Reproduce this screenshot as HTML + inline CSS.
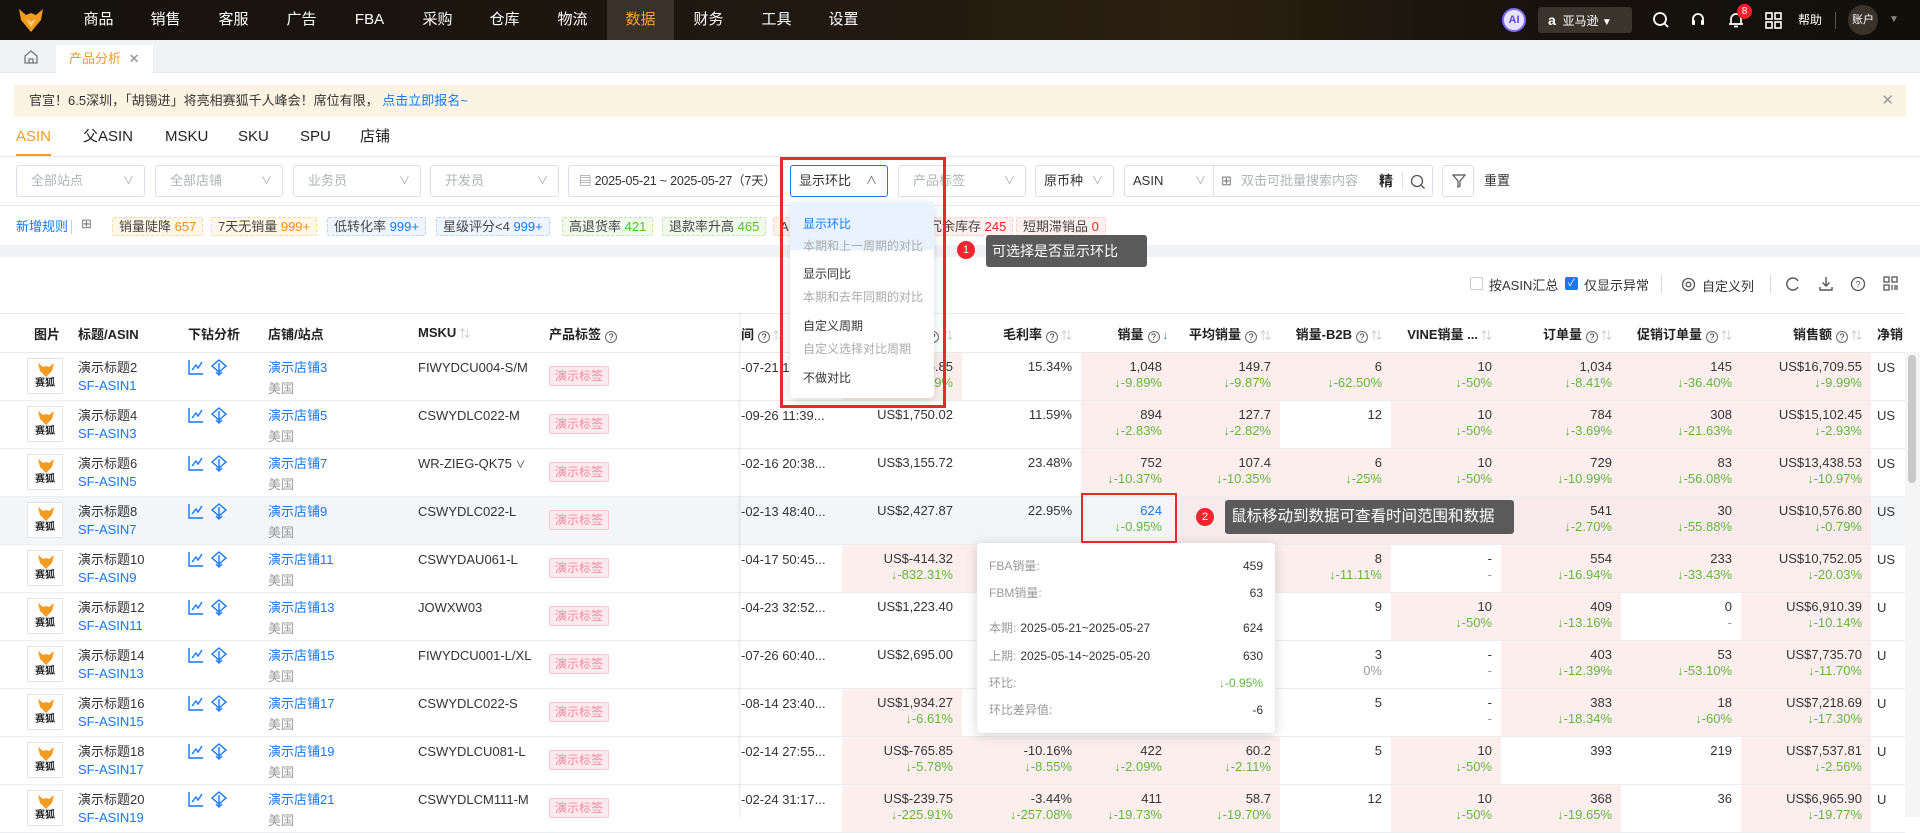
<!DOCTYPE html>
<html><head><meta charset="utf-8">
<style>
*{box-sizing:border-box;margin:0;padding:0}
body{width:1920px;height:817px;overflow:hidden;position:relative;background:#fff;font-family:"Liberation Sans","Noto Sans CJK SC",sans-serif;font-size:13px;color:#333}
.abs{position:absolute}
.nav{left:0;top:0;width:1920px;height:40px;background:linear-gradient(90deg,#15110c 0%,#1f1810 40%,#2b1f10 62%,#17120c 80%,#120f0b 100%)}
.nav .it{position:absolute;top:0;height:40px;width:67px;line-height:40px;text-align:center;color:#fff;font-size:15px}
.nav .on{background:#3a3128;color:#f7a531}
.tabbar{left:0;top:40px;width:1920px;height:33px;background:#f0f2f5;border-bottom:1px solid #e4e6ea}
.banner{left:14px;top:85px;width:1892px;height:32px;background:#fdf3e2;line-height:32px;padding-left:15px;font-size:13px;color:#333}
.tabs span{position:absolute;top:126px;font-size:15px;color:#222;line-height:22px;height:22px}
.sel{position:absolute;top:165px;height:32px;border:1px solid #dcdfe6;border-radius:3px;background:#fff;line-height:30px;padding-left:14px;color:#b0b3b8;font-size:13px;white-space:nowrap;overflow:hidden}
.sel .cv{position:absolute;right:10px;top:0;color:#aaa;font-size:11px}
.tag{position:absolute;top:217px;height:19px;line-height:17px;padding:0 6px;font-size:13px;border:1px dashed;border-radius:2px;color:#444;white-space:nowrap}
table{border-collapse:collapse;table-layout:fixed;position:absolute;left:0;top:313px;width:1905px}
th{height:39px;font-weight:bold;font-size:13px;color:#222;border-bottom:1px solid #e8eaee;border-top:1px solid #e8eaee;white-space:nowrap;overflow:hidden;text-align:left;padding-left:6px}
th.r{text-align:right;padding-right:9px}
td{height:48px;border-bottom:1px solid #ebedf0;vertical-align:top;white-space:nowrap;overflow:hidden;padding-top:6px}
td.l{padding-left:6px}
td.n{text-align:right;padding-right:9px;line-height:16px}
td.p{background:#fdeeee}
td div{line-height:18px}
td.n div{line-height:16px}
.g{color:#5fb83e}
.b{color:#1677ff}
.gr{color:#999}
.q{display:inline-block;width:12px;height:12px;border:1px solid #666;border-radius:50%;font-size:9px;line-height:10px;text-align:center;font-weight:normal;margin-left:4px;vertical-align:-1px}
.s{color:#c3c6cc;font-weight:normal;font-size:11px;margin-left:3px}
.img{width:36px;height:36px;border:1px solid #e3e3e3;margin:-1px 0 0 27px;text-align:center;position:relative}
.img svg{position:absolute;left:9px;top:3px}
.img i{position:absolute;left:0;right:0;top:19px;font-style:normal;font-size:10px;font-weight:bold;color:#222;line-height:12px}
.ptag{display:inline-block;margin-top:7px;height:20px;line-height:18px;padding:0 5px;border:1px solid #f9c6d0;background:#fde9ee;color:#f48ba5;border-radius:2px;font-size:12px}
tr.h td{background:#f4f5f7}
tr.h td.p{background:#f9eaec}
.dd{left:790px;top:202px;width:144px;height:196px;background:#fff;border-radius:4px;box-shadow:0 3px 10px rgba(0,0,0,.15);z-index:5}
.dd div{position:absolute;left:0;width:144px;padding-left:13px;font-size:12px}
.tip{background:#5a5a5a;color:#fff;border-radius:3px;z-index:7;white-space:nowrap}
.num{width:18px;height:18px;border-radius:50%;background:#f0262e;color:#fff;font-size:11px;text-align:center;line-height:18px;z-index:7}
.pop{left:977px;top:543px;width:298px;height:190px;background:#fff;border-radius:4px;box-shadow:0 2px 12px rgba(0,0,0,.18);z-index:6}
.pop div{position:absolute;left:12px;right:12px;font-size:12px;color:#999;height:20px;line-height:20px}
.pop b{position:absolute;right:0;top:0;font-weight:normal;color:#333}
.pop span{color:#333;margin-left:4px}
</style></head><body>

<div class="abs nav">
  <svg class="abs" style="left:18px;top:8px" width="26" height="25" viewBox="0 0 26 25"><path d="M1 1 L8 7 L13 5 L18 7 L25 1 L23 12 L13 24 L3 12 Z" fill="#f39b1f"/><path d="M8 11 L13 14 L18 11 L13 19 Z" fill="#ffd27a"/></svg>
  <div class="it" style="left:65px">商品</div>
  <div class="it" style="left:132px">销售</div>
  <div class="it" style="left:200px">客服</div>
  <div class="it" style="left:268px">广告</div>
  <div class="it" style="left:336px">FBA</div>
  <div class="it" style="left:404px">采购</div>
  <div class="it" style="left:471px">仓库</div>
  <div class="it" style="left:539px">物流</div>
  <div class="it on" style="left:607px">数据</div>
  <div class="it" style="left:675px">财务</div>
  <div class="it" style="left:743px">工具</div>
  <div class="it" style="left:810px">设置</div>
  <div class="abs" style="left:1502px;top:8px;width:24px;height:24px;border-radius:50%;background:#e8e4ff;border:2px solid #7b6cf6;color:#5a45e8;font-weight:bold;font-size:11px;text-align:center;line-height:20px">AI</div>
  <div class="abs" style="left:1538px;top:7px;width:94px;height:26px;border-radius:3px;background:#3b342c;color:#fff;font-size:12px;line-height:26px;padding-left:10px"><b style="font-size:14px">a</b>&nbsp; 亚马逊 <span style="font-size:10px">▼</span></div>
  <svg class="abs" style="left:1652px;top:11px" width="18" height="18" viewBox="0 0 18 18"><circle cx="8" cy="8" r="6" stroke="#fff" stroke-width="1.8" fill="none"/><path d="M12.5 12.5 L16 16" stroke="#fff" stroke-width="1.8"/></svg>
  <svg class="abs" style="left:1689px;top:11px" width="18" height="18" viewBox="0 0 18 18"><path d="M4 11 V8 a5 5 0 0 1 10 0 V11" stroke="#fff" stroke-width="1.8" fill="none"/><rect x="3" y="9" width="3" height="5" rx="1" fill="#fff"/><rect x="12" y="9" width="3" height="5" rx="1" fill="#fff"/></svg>
  <svg class="abs" style="left:1727px;top:11px" width="18" height="18" viewBox="0 0 18 18"><path d="M4 13 V8 a5 5 0 0 1 10 0 V13 Z M2 13 H16 M7 15.5 H11" stroke="#fff" stroke-width="1.7" fill="none"/></svg>
  <div class="abs" style="left:1737px;top:4px;width:15px;height:15px;border-radius:50%;background:#f5222d;color:#fff;font-size:10px;text-align:center;line-height:15px">8</div>
  <svg class="abs" style="left:1765px;top:12px" width="17" height="17" viewBox="0 0 17 17"><g fill="none" stroke="#fff" stroke-width="1.6"><rect x="1" y="1" width="6" height="6"/><rect x="10" y="1" width="6" height="6"/><rect x="1" y="10" width="6" height="6"/><rect x="10" y="10" width="6" height="6"/></g></svg>
  <div class="abs" style="left:1798px;top:0;line-height:40px;color:#fff;font-size:12px">帮助</div>
  <div class="abs" style="left:1835px;top:12px;width:1px;height:17px;background:#555"></div>
  <div class="abs" style="left:1848px;top:5px;width:30px;height:30px;border-radius:50%;background:#3a332c;color:#fff;font-size:11px;text-align:center;line-height:30px">账户</div>
  <div class="abs" style="left:1889px;top:0;line-height:40px;color:#888;font-size:10px">▼</div>
</div>

<div class="abs tabbar">
  <svg class="abs" style="left:23px;top:9px" width="16" height="16" viewBox="0 0 16 16"><path d="M2 7 L8 2 L14 7 V14 H2 Z M6 14 V10 H10 V14" stroke="#777" stroke-width="1.3" fill="none"/></svg>
  <div class="abs" style="left:56px;top:5px;width:97px;height:28px;background:#fff;color:#f59a23;line-height:28px;padding-left:13px;font-size:13px">产品分析 <span style="color:#888;margin-left:4px">✕</span></div>
</div>

<div class="abs banner">官宣！6.5深圳，「胡锡进」将亮相赛狐千人峰会！席位有限，&nbsp;<span style="color:#1677ff">点击立即报名~</span><span class="abs" style="right:12px;top:0;color:#999;font-size:15px">✕</span></div>

<div class="tabs">
  <span style="left:16px;color:#f59a23">ASIN</span>
  <span style="left:83px">父ASIN</span>
  <span style="left:165px">MSKU</span>
  <span style="left:238px">SKU</span>
  <span style="left:300px">SPU</span>
  <span style="left:360px">店铺</span>
</div>
<div class="abs" style="left:16px;top:154px;width:35px;height:2px;background:#f59a23"></div>
<div class="abs" style="left:0;top:156px;width:1920px;height:1px;background:#e8eaee"></div>

<div class="sel" style="left:16px;width:129px">全部站点<span class="cv">∨</span></div>
<div class="sel" style="left:155px;width:128px">全部店铺<span class="cv">∨</span></div>
<div class="sel" style="left:293px;width:128px">业务员<span class="cv">∨</span></div>
<div class="sel" style="left:430px;width:129px">开发员<span class="cv">∨</span></div>
<div class="sel" style="left:568px;width:213px;color:#333;padding-left:10px;font-size:12.5px;letter-spacing:-0.2px"><span style="color:#777">▤</span> 2025-05-21 ~ 2025-05-27（7天）</div>
<div class="sel" style="left:790px;width:98px;color:#333;border-color:#1677ff;padding-left:8px">显示环比<span class="cv" style="color:#666">∧</span></div>
<div class="sel" style="left:898px;width:128px">产品标签<span class="cv">∨</span></div>
<div class="sel" style="left:1035px;width:79px;color:#333;padding-left:8px">原币种<span class="cv">∨</span></div>
<div class="sel" style="left:1124px;width:309px;color:#333;padding-left:8px">ASIN<span class="abs" style="left:70px;top:0;color:#aaa;font-size:11px">∨</span>
  <span class="abs" style="left:88px;top:0;height:30px;width:1px;background:#dcdfe6"></span>
  <span class="abs" style="left:96px;top:0;color:#777">⊞</span>
  <span class="abs" style="left:116px;top:0;color:#b0b3b8">双击可批量搜索内容</span>
  <span class="abs" style="left:254px;top:0;color:#222;font-weight:bold;font-size:14px">精</span>
  <span class="abs" style="left:277px;top:6px;height:18px;width:1px;background:#dcdfe6"></span>
  <svg class="abs" style="left:285px;top:8px" width="16" height="16" viewBox="0 0 16 16"><circle cx="7" cy="7" r="5.5" stroke="#555" stroke-width="1.3" fill="none"/><path d="M11 11 L14.5 14.5" stroke="#555" stroke-width="1.3"/></svg>
</div>
<div class="sel" style="left:1442px;width:32px;padding:0"><svg class="abs" style="left:8px;top:7px" width="16" height="16" viewBox="0 0 16 16"><path d="M2 2 H14 L9 8 V13 L7 14 V8 Z" stroke="#555" stroke-width="1.2" fill="none"/></svg></div>
<div class="abs" style="left:1484px;top:165px;line-height:32px;font-size:13px">重置</div>

<div class="abs" style="left:0;top:205px;width:1920px;height:1px;background:#e8eaee"></div>
<div class="abs" style="left:16px;top:217px;line-height:19px;color:#1677ff">新增规则</div>
<div class="abs" style="left:71px;top:220px;width:1px;height:14px;background:#ccc"></div>
<div class="abs" style="left:81px;top:216px;color:#777">⊞</div>
<div class="tag" style="left:112px;background:#fff7e8;border-color:#fbd9a6">销量陡降 <span style="color:#fa8c16">657</span></div>
<div class="tag" style="left:211px;background:#fff7e8;border-color:#fbd9a6">7天无销量 <span style="color:#fa8c16">999+</span></div>
<div class="tag" style="left:327px;background:#eef5ff;border-color:#b7d4ff">低转化率 <span style="color:#1677ff">999+</span></div>
<div class="tag" style="left:436px;background:#eef5ff;border-color:#b7d4ff">星级评分&lt;4 <span style="color:#1677ff">999+</span></div>
<div class="tag" style="left:562px;background:#f1f9ec;border-color:#c3e6ad">高退货率 <span style="color:#52c41a">421</span></div>
<div class="tag" style="left:662px;background:#f1f9ec;border-color:#c3e6ad">退款率升高 <span style="color:#52c41a">465</span></div>
<div class="tag" style="left:773px;background:#fff0f0;border-color:#fcc">A</div>
<div class="tag" style="left:922px;background:#fff0f0;border-color:#fcc">冗余库存 <span style="color:#f5222d">245</span></div>
<div class="tag" style="left:1016px;background:#fff0f0;border-color:#fcc">短期滞销品 <span style="color:#f5222d">0</span></div>

<div class="abs" style="left:0;top:245px;width:1920px;height:12px;background:#f0f2f5"></div>

<div class="abs" style="left:1470px;top:277px;width:13px;height:13px;border:1px solid #ccc;border-radius:2px"></div>
<div class="abs" style="left:1489px;top:275px;font-size:13px">按ASIN汇总</div>
<div class="abs" style="left:1565px;top:277px;width:13px;height:13px;background:#1677ff;border-radius:2px;color:#fff;font-size:10px;line-height:13px;text-align:center">✓</div>
<div class="abs" style="left:1584px;top:275px;font-size:13px">仅显示异常</div>
<div class="abs" style="left:1661px;top:274px;width:1px;height:20px;background:#ddd"></div>
<svg class="abs" style="left:1681px;top:277px" width="15" height="15" viewBox="0 0 15 15"><circle cx="7.5" cy="7.5" r="6" stroke="#555" stroke-width="1.3" fill="none"/><circle cx="7.5" cy="7.5" r="2.3" stroke="#555" stroke-width="1.3" fill="none"/></svg>
<div class="abs" style="left:1702px;top:276px;font-size:13px">自定义列</div>
<div class="abs" style="left:1770px;top:274px;width:1px;height:20px;background:#ddd"></div>
<svg class="abs" style="left:1785px;top:276px" width="16" height="16" viewBox="0 0 16 16"><path d="M13 5 A6 6 0 1 0 13 11" stroke="#555" stroke-width="1.4" fill="none"/></svg>
<svg class="abs" style="left:1818px;top:276px" width="16" height="16" viewBox="0 0 16 16"><path d="M8 1 V10 M4.5 6.5 L8 10 L11.5 6.5 M2 11 V14 H14 V11" stroke="#555" stroke-width="1.4" fill="none"/></svg>
<svg class="abs" style="left:1850px;top:276px" width="16" height="16" viewBox="0 0 16 16"><circle cx="8" cy="8" r="6.5" stroke="#555" stroke-width="1.3" fill="none"/><text x="8" y="11.5" font-size="9" text-anchor="middle" fill="#555" font-family="Liberation Sans">?</text></svg>
<svg class="abs" style="left:1883px;top:276px" width="15" height="15" viewBox="0 0 15 15"><g fill="none" stroke="#555" stroke-width="1.3"><rect x="1" y="1" width="5" height="5"/><rect x="9" y="1" width="5" height="5"/><rect x="1" y="9" width="5" height="5"/><path d="M9 9 V14 M12 9 V14 M14 9 V14"/></g></svg>

<table>
<colgroup><col style="width:72px"><col style="width:110px"><col style="width:80px"><col style="width:150px"><col style="width:131px"><col style="width:198px"><col style="width:101px"><col style="width:120px"><col style="width:119px"><col style="width:96px"><col style="width:103px"><col style="width:111px"><col style="width:110px"><col style="width:120px"><col style="width:120px"><col style="width:130px"><col style="width:34px"></colgroup>
<tr><th style="padding-left:34px">图片</th><th>标题/ASIN</th><th>下钻分析</th><th>店铺/站点</th><th>MSKU<span class="s">⇅</span></th><th>产品标签<span class="q">?</span></th><th style="padding-left:0">间<span class="q">?</span><span class="s">⇅</span></th><th class="r">销售额<span class="q">?</span><span class="s">⇅</span></th><th class="r">毛利率<span class="q">?</span><span class="s">⇅</span></th><th class="r">销量<span class="q">?</span><span class="s" style="color:#1677ff">↓</span></th><th class="r">平均销量<span class="q">?</span><span class="s">⇅</span></th><th class="r">销量-B2B<span class="q">?</span><span class="s">⇅</span></th><th class="r">VINE销量 ...<span class="s">⇅</span></th><th class="r">订单量<span class="q">?</span><span class="s">⇅</span></th><th class="r">促销订单量<span class="q">?</span><span class="s">⇅</span></th><th class="r">销售额<span class="q">?</span><span class="s">⇅</span></th><th>净销</th></tr>

<tr><td><div class="img"><svg width="18" height="16" viewBox="0 0 18 16"><path d="M1 1 L6 5 L9 4 L12 5 L17 1 L15 9 L9 15 L3 9 Z" fill="#f39b1f"/></svg><i>赛狐</i></div></td><td class="l"><div>演示标题2</div><div class="b">SF-ASIN1</div></td><td class="l"><svg width="44" height="18" viewBox="0 0 44 18"><path d="M1 1 V15 H15 M4 11 L8 6 L10 9 L14 3" stroke="#1677ff" stroke-width="1.4" fill="none"/><path d="M31 1 L38 7 L31 13 L24 7 Z M31 4 V16 M28 13 L31 16 L34 13" stroke="#1677ff" stroke-width="1.4" fill="none"/></svg></td><td class="l"><div class="b">演示店铺3</div><div class="gr" style="margin-top:3px">美国</div></td><td class="l"><div>FIWYDCU004-S/M</div></td><td class="l"><span class="ptag">演示标签</span></td><td><div>-07-21 12:45...</div></td><td class="n p"><div>US$2,115.85</div><div class="g">↓-3.39%</div></td><td class="n"><div>15.34%</div></td><td class="n p" style="padding-right:15px"><div>1,048</div><div class="g">↓-9.89%</div></td><td class="n p"><div>149.7</div><div class="g">↓-9.87%</div></td><td class="n p"><div>6</div><div class="g">↓-62.50%</div></td><td class="n p"><div>10</div><div class="g">↓-50%</div></td><td class="n p"><div>1,034</div><div class="g">↓-8.41%</div></td><td class="n p"><div>145</div><div class="g">↓-36.40%</div></td><td class="n p"><div>US$16,709.55</div><div class="g">↓-9.99%</div></td><td class="l"><div>US</div></td></tr>

<tr><td><div class="img"><svg width="18" height="16" viewBox="0 0 18 16"><path d="M1 1 L6 5 L9 4 L12 5 L17 1 L15 9 L9 15 L3 9 Z" fill="#f39b1f"/></svg><i>赛狐</i></div></td><td class="l"><div>演示标题4</div><div class="b">SF-ASIN3</div></td><td class="l"><svg width="44" height="18" viewBox="0 0 44 18"><path d="M1 1 V15 H15 M4 11 L8 6 L10 9 L14 3" stroke="#1677ff" stroke-width="1.4" fill="none"/><path d="M31 1 L38 7 L31 13 L24 7 Z M31 4 V16 M28 13 L31 16 L34 13" stroke="#1677ff" stroke-width="1.4" fill="none"/></svg></td><td class="l"><div class="b">演示店铺5</div><div class="gr" style="margin-top:3px">美国</div></td><td class="l"><div>CSWYDLC022-M</div></td><td class="l"><span class="ptag">演示标签</span></td><td><div>-09-26 11:39...</div></td><td class="n"><div>US$1,750.02</div></td><td class="n"><div>11.59%</div></td><td class="n p" style="padding-right:15px"><div>894</div><div class="g">↓-2.83%</div></td><td class="n p"><div>127.7</div><div class="g">↓-2.82%</div></td><td class="n"><div>12</div></td><td class="n p"><div>10</div><div class="g">↓-50%</div></td><td class="n p"><div>784</div><div class="g">↓-3.69%</div></td><td class="n p"><div>308</div><div class="g">↓-21.63%</div></td><td class="n p"><div>US$15,102.45</div><div class="g">↓-2.93%</div></td><td class="l"><div>US</div></td></tr>

<tr><td><div class="img"><svg width="18" height="16" viewBox="0 0 18 16"><path d="M1 1 L6 5 L9 4 L12 5 L17 1 L15 9 L9 15 L3 9 Z" fill="#f39b1f"/></svg><i>赛狐</i></div></td><td class="l"><div>演示标题6</div><div class="b">SF-ASIN5</div></td><td class="l"><svg width="44" height="18" viewBox="0 0 44 18"><path d="M1 1 V15 H15 M4 11 L8 6 L10 9 L14 3" stroke="#1677ff" stroke-width="1.4" fill="none"/><path d="M31 1 L38 7 L31 13 L24 7 Z M31 4 V16 M28 13 L31 16 L34 13" stroke="#1677ff" stroke-width="1.4" fill="none"/></svg></td><td class="l"><div class="b">演示店铺7</div><div class="gr" style="margin-top:3px">美国</div></td><td class="l"><div>WR-ZIEG-QK75 <span style="font-size:10px">∨</span></div></td><td class="l"><span class="ptag">演示标签</span></td><td><div>-02-16 20:38...</div></td><td class="n"><div>US$3,155.72</div></td><td class="n"><div>23.48%</div></td><td class="n p" style="padding-right:15px"><div>752</div><div class="g">↓-10.37%</div></td><td class="n p"><div>107.4</div><div class="g">↓-10.35%</div></td><td class="n p"><div>6</div><div class="g">↓-25%</div></td><td class="n p"><div>10</div><div class="g">↓-50%</div></td><td class="n p"><div>729</div><div class="g">↓-10.99%</div></td><td class="n p"><div>83</div><div class="g">↓-56.08%</div></td><td class="n p"><div>US$13,438.53</div><div class="g">↓-10.97%</div></td><td class="l"><div>US</div></td></tr>

<tr class="h"><td><div class="img" style="background:#fff"><svg width="18" height="16" viewBox="0 0 18 16"><path d="M1 1 L6 5 L9 4 L12 5 L17 1 L15 9 L9 15 L3 9 Z" fill="#f39b1f"/></svg><i>赛狐</i></div></td><td class="l"><div>演示标题8</div><div class="b">SF-ASIN7</div></td><td class="l"><svg width="44" height="18" viewBox="0 0 44 18"><path d="M1 1 V15 H15 M4 11 L8 6 L10 9 L14 3" stroke="#1677ff" stroke-width="1.4" fill="none"/><path d="M31 1 L38 7 L31 13 L24 7 Z M31 4 V16 M28 13 L31 16 L34 13" stroke="#1677ff" stroke-width="1.4" fill="none"/></svg></td><td class="l"><div class="b">演示店铺9</div><div class="gr" style="margin-top:3px">美国</div></td><td class="l"><div>CSWYDLC022-L</div></td><td class="l"><span class="ptag">演示标签</span></td><td><div>-02-13 48:40...</div></td><td class="n"><div>US$2,427.87</div></td><td class="n"><div>22.95%</div></td><td class="n" style="padding-right:15px"><div class="b">624</div><div class="g">↓-0.95%</div></td><td class="n p"><div>89.1</div><div class="g">↓-1%</div></td><td class="n p"><div>6</div><div class="g">↓-60%</div></td><td class="n p"><div>10</div><div class="g">↓-50%</div></td><td class="n p"><div>541</div><div class="g">↓-2.70%</div></td><td class="n p"><div>30</div><div class="g">↓-55.88%</div></td><td class="n p"><div>US$10,576.80</div><div class="g">↓-0.79%</div></td><td class="l"><div>US</div></td></tr>

<tr><td><div class="img"><svg width="18" height="16" viewBox="0 0 18 16"><path d="M1 1 L6 5 L9 4 L12 5 L17 1 L15 9 L9 15 L3 9 Z" fill="#f39b1f"/></svg><i>赛狐</i></div></td><td class="l"><div>演示标题10</div><div class="b">SF-ASIN9</div></td><td class="l"><svg width="44" height="18" viewBox="0 0 44 18"><path d="M1 1 V15 H15 M4 11 L8 6 L10 9 L14 3" stroke="#1677ff" stroke-width="1.4" fill="none"/><path d="M31 1 L38 7 L31 13 L24 7 Z M31 4 V16 M28 13 L31 16 L34 13" stroke="#1677ff" stroke-width="1.4" fill="none"/></svg></td><td class="l"><div class="b">演示店铺11</div><div class="gr" style="margin-top:3px">美国</div></td><td class="l"><div>CSWYDAU061-L</div></td><td class="l"><span class="ptag">演示标签</span></td><td><div>-04-17 50:45...</div></td><td class="n p"><div>US$-414.32</div><div class="g">↓-832.31%</div></td><td class="n p"><div>-8.12%</div><div class="g">↓-5.10%</div></td><td class="n p" style="padding-right:15px"><div>520</div><div class="g">↓-3.10%</div></td><td class="n p"><div>74.3</div><div class="g">↓-3.12%</div></td><td class="n p"><div>8</div><div class="g">↓-11.11%</div></td><td class="n"><div>-</div><div class="gr">-</div></td><td class="n p"><div>554</div><div class="g">↓-16.94%</div></td><td class="n p"><div>233</div><div class="g">↓-33.43%</div></td><td class="n p"><div>US$10,752.05</div><div class="g">↓-20.03%</div></td><td class="l"><div>US</div></td></tr>

<tr><td><div class="img"><svg width="18" height="16" viewBox="0 0 18 16"><path d="M1 1 L6 5 L9 4 L12 5 L17 1 L15 9 L9 15 L3 9 Z" fill="#f39b1f"/></svg><i>赛狐</i></div></td><td class="l"><div>演示标题12</div><div class="b">SF-ASIN11</div></td><td class="l"><svg width="44" height="18" viewBox="0 0 44 18"><path d="M1 1 V15 H15 M4 11 L8 6 L10 9 L14 3" stroke="#1677ff" stroke-width="1.4" fill="none"/><path d="M31 1 L38 7 L31 13 L24 7 Z M31 4 V16 M28 13 L31 16 L34 13" stroke="#1677ff" stroke-width="1.4" fill="none"/></svg></td><td class="l"><div class="b">演示店铺13</div><div class="gr" style="margin-top:3px">美国</div></td><td class="l"><div>JOWXW03</div></td><td class="l"><span class="ptag">演示标签</span></td><td><div>-04-23 32:52...</div></td><td class="n"><div>US$1,223.40</div></td><td class="n"><div>9.12%</div></td><td class="n" style="padding-right:15px"><div>410</div></td><td class="n"><div>58.6</div></td><td class="n"><div>9</div></td><td class="n p"><div>10</div><div class="g">↓-50%</div></td><td class="n p"><div>409</div><div class="g">↓-13.16%</div></td><td class="n"><div>0</div><div class="gr">-</div></td><td class="n p"><div>US$6,910.39</div><div class="g">↓-10.14%</div></td><td class="l"><div>U</div></td></tr>

<tr><td><div class="img"><svg width="18" height="16" viewBox="0 0 18 16"><path d="M1 1 L6 5 L9 4 L12 5 L17 1 L15 9 L9 15 L3 9 Z" fill="#f39b1f"/></svg><i>赛狐</i></div></td><td class="l"><div>演示标题14</div><div class="b">SF-ASIN13</div></td><td class="l"><svg width="44" height="18" viewBox="0 0 44 18"><path d="M1 1 V15 H15 M4 11 L8 6 L10 9 L14 3" stroke="#1677ff" stroke-width="1.4" fill="none"/><path d="M31 1 L38 7 L31 13 L24 7 Z M31 4 V16 M28 13 L31 16 L34 13" stroke="#1677ff" stroke-width="1.4" fill="none"/></svg></td><td class="l"><div class="b">演示店铺15</div><div class="gr" style="margin-top:3px">美国</div></td><td class="l"><div>FIWYDCU001-L/XL</div></td><td class="l"><span class="ptag">演示标签</span></td><td><div>-07-26 60:40...</div></td><td class="n"><div>US$2,695.00</div></td><td class="n"><div>12.30%</div></td><td class="n" style="padding-right:15px"><div>403</div></td><td class="n"><div>57.6</div></td><td class="n"><div>3</div><div class="gr">0%</div></td><td class="n"><div>-</div><div class="gr">-</div></td><td class="n p"><div>403</div><div class="g">↓-12.39%</div></td><td class="n p"><div>53</div><div class="g">↓-53.10%</div></td><td class="n p"><div>US$7,735.70</div><div class="g">↓-11.70%</div></td><td class="l"><div>U</div></td></tr>

<tr><td><div class="img"><svg width="18" height="16" viewBox="0 0 18 16"><path d="M1 1 L6 5 L9 4 L12 5 L17 1 L15 9 L9 15 L3 9 Z" fill="#f39b1f"/></svg><i>赛狐</i></div></td><td class="l"><div>演示标题16</div><div class="b">SF-ASIN15</div></td><td class="l"><svg width="44" height="18" viewBox="0 0 44 18"><path d="M1 1 V15 H15 M4 11 L8 6 L10 9 L14 3" stroke="#1677ff" stroke-width="1.4" fill="none"/><path d="M31 1 L38 7 L31 13 L24 7 Z M31 4 V16 M28 13 L31 16 L34 13" stroke="#1677ff" stroke-width="1.4" fill="none"/></svg></td><td class="l"><div class="b">演示店铺17</div><div class="gr" style="margin-top:3px">美国</div></td><td class="l"><div>CSWYDLC022-S</div></td><td class="l"><span class="ptag">演示标签</span></td><td><div>-08-14 23:40...</div></td><td class="n p"><div>US$1,934.27</div><div class="g">↓-6.61%</div></td><td class="n"><div>8.40%</div></td><td class="n" style="padding-right:15px"><div>390</div></td><td class="n"><div>55.7</div></td><td class="n"><div>5</div></td><td class="n"><div>-</div><div class="gr">-</div></td><td class="n p"><div>383</div><div class="g">↓-18.34%</div></td><td class="n p"><div>18</div><div class="g">↓-60%</div></td><td class="n p"><div>US$7,218.69</div><div class="g">↓-17.30%</div></td><td class="l"><div>U</div></td></tr>

<tr><td><div class="img"><svg width="18" height="16" viewBox="0 0 18 16"><path d="M1 1 L6 5 L9 4 L12 5 L17 1 L15 9 L9 15 L3 9 Z" fill="#f39b1f"/></svg><i>赛狐</i></div></td><td class="l"><div>演示标题18</div><div class="b">SF-ASIN17</div></td><td class="l"><svg width="44" height="18" viewBox="0 0 44 18"><path d="M1 1 V15 H15 M4 11 L8 6 L10 9 L14 3" stroke="#1677ff" stroke-width="1.4" fill="none"/><path d="M31 1 L38 7 L31 13 L24 7 Z M31 4 V16 M28 13 L31 16 L34 13" stroke="#1677ff" stroke-width="1.4" fill="none"/></svg></td><td class="l"><div class="b">演示店铺19</div><div class="gr" style="margin-top:3px">美国</div></td><td class="l"><div>CSWYDLCU081-L</div></td><td class="l"><span class="ptag">演示标签</span></td><td><div>-02-14 27:55...</div></td><td class="n p"><div>US$-765.85</div><div class="g">↓-5.78%</div></td><td class="n p"><div>-10.16%</div><div class="g">↓-8.55%</div></td><td class="n p" style="padding-right:15px"><div>422</div><div class="g">↓-2.09%</div></td><td class="n p"><div>60.2</div><div class="g">↓-2.11%</div></td><td class="n"><div>5</div></td><td class="n p"><div>10</div><div class="g">↓-50%</div></td><td class="n"><div>393</div></td><td class="n"><div>219</div></td><td class="n p"><div>US$7,537.81</div><div class="g">↓-2.56%</div></td><td class="l"><div>U</div></td></tr>

<tr><td><div class="img"><svg width="18" height="16" viewBox="0 0 18 16"><path d="M1 1 L6 5 L9 4 L12 5 L17 1 L15 9 L9 15 L3 9 Z" fill="#f39b1f"/></svg><i>赛狐</i></div></td><td class="l"><div>演示标题20</div><div class="b">SF-ASIN19</div></td><td class="l"><svg width="44" height="18" viewBox="0 0 44 18"><path d="M1 1 V15 H15 M4 11 L8 6 L10 9 L14 3" stroke="#1677ff" stroke-width="1.4" fill="none"/><path d="M31 1 L38 7 L31 13 L24 7 Z M31 4 V16 M28 13 L31 16 L34 13" stroke="#1677ff" stroke-width="1.4" fill="none"/></svg></td><td class="l"><div class="b">演示店铺21</div><div class="gr" style="margin-top:3px">美国</div></td><td class="l"><div>CSWYDLCM111-M</div></td><td class="l"><span class="ptag">演示标签</span></td><td><div>-02-24 31:17...</div></td><td class="n p"><div>US$-239.75</div><div class="g">↓-225.91%</div></td><td class="n p"><div>-3.44%</div><div class="g">↓-257.08%</div></td><td class="n p" style="padding-right:15px"><div>411</div><div class="g">↓-19.73%</div></td><td class="n p"><div>58.7</div><div class="g">↓-19.70%</div></td><td class="n"><div>12</div></td><td class="n p"><div>10</div><div class="g">↓-50%</div></td><td class="n p"><div>368</div><div class="g">↓-19.65%</div></td><td class="n"><div>36</div></td><td class="n p"><div>US$6,965.90</div><div class="g">↓-19.77%</div></td><td class="l"><div>U</div></td></tr>
</table>

<div class="abs" style="left:737px;top:313px;width:4px;height:504px;background:linear-gradient(90deg,rgba(0,0,0,0),rgba(0,0,0,.06))"></div>
<div class="abs" style="left:1905px;top:352px;width:15px;height:465px;background:#f5f5f5"></div>
<div class="abs" style="left:1908px;top:355px;width:8px;height:128px;background:#c8c8c8;border-radius:4px"></div>

<div class="abs dd">
  <div style="top:0;height:48px;background:#e8f3ff"></div>
  <div style="top:12px;color:#1677ff;line-height:20px">显示环比</div>
  <div style="top:34px;color:#aaa;line-height:20px">本期和上一周期的对比</div>
  <div style="top:62px;color:#333;line-height:20px">显示同比</div>
  <div style="top:85px;color:#aaa;line-height:20px">本期和去年同期的对比</div>
  <div style="top:114px;color:#333;line-height:20px">自定义周期</div>
  <div style="top:137px;color:#aaa;line-height:20px">自定义选择对比周期</div>
  <div style="top:166px;color:#333;line-height:20px">不做对比</div>
</div>
<div class="abs" style="left:780px;top:157px;width:166px;height:251px;border:3px solid #f0262e;z-index:8"></div>
<div class="abs num" style="left:957px;top:241px">1</div>
<div class="abs tip" style="left:986px;top:235px;width:161px;height:32px;line-height:32px;padding-left:6px;font-size:14px">可选择是否显示环比</div>

<div class="abs" style="left:1081px;top:493px;width:96px;height:50px;border:2px solid #f0262e;z-index:8"></div>
<div class="abs num" style="left:1196px;top:508px">2</div>
<div class="abs tip" style="left:1225px;top:500px;width:289px;height:34px;line-height:34px;padding-left:6px;font-size:15.5px">鼠标移动到数据可查看时间范围和数据</div>

<div class="abs pop">
  <div style="top:13px">FBA销量:<b>459</b></div>
  <div style="top:40px">FBM销量:<b>63</b></div>
  <div style="top:75px">本期:<span>2025-05-21~2025-05-27</span><b>624</b></div>
  <div style="top:103px">上期:<span>2025-05-14~2025-05-20</span><b>630</b></div>
  <div style="top:130px">环比:<b style="color:#5fb83e">↓-0.95%</b></div>
  <div style="top:157px">环比差异值:<b>-6</b></div>
</div>
</body></html>
